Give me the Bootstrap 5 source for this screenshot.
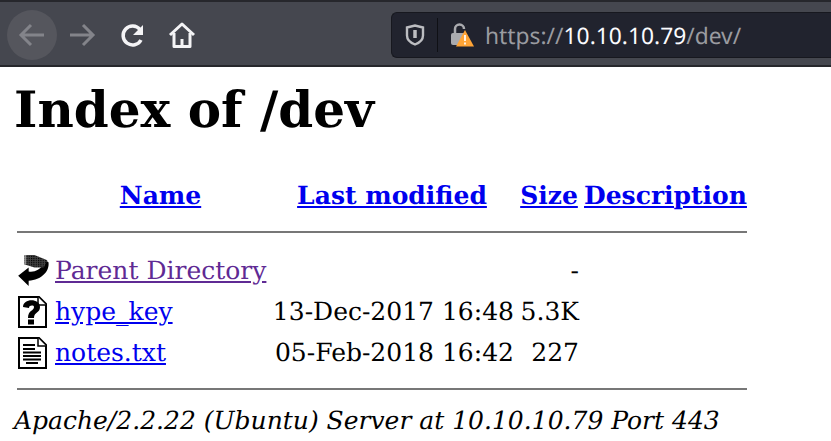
<!DOCTYPE html>
<html lang="en">
<head>
<meta charset="utf-8">
<title>Index of /dev</title>
<link href="https://cdn.jsdelivr.net/npm/bootstrap@5.3.0/dist/css/bootstrap.min.css" rel="stylesheet">
<style>
html,body{height:441px;overflow:hidden}
body{background:#fff;color:#000;font-family:"DejaVu Serif",serif;font-size:25px;line-height:29px;text-rendering:geometricPrecision}
.chrome{height:67px;background:#45474f;border-top:2px solid #26272c;border-bottom:2px solid #26272c;padding:3px 0 0 7px}
.tbtn{width:50px;height:50px;flex:none}
.tbtn.back{background:#55565d;border-radius:50%}
.urlbar{margin-left:auto;width:440px;height:46px;background:#21232e;border:1px solid #17181f;border-right:0;border-radius:6px 0 0 6px;padding-left:13px;font-family:"Noto Sans","Open Sans",sans-serif;font-size:22.800px;color:#9a9ba0}
.urlbar b{font-weight:400;color:#fbfbfe}
.sep{width:1px;height:34px;background:#0f1015;margin:0 12px}
.lockic{margin-right:11px}
.pg{padding:0 0 0 14px}
h1.ttl{font-family:"DejaVu Serif",serif;font-weight:700;font-size:50px;line-height:58px;margin:14px 0 0;color:#000}
.lst{margin:36px 0 0 0;border-collapse:separate;border-spacing:3px 0;table-layout:fixed;width:736px}
.lst th{font-weight:700;text-align:center;height:38px;vertical-align:middle;padding:2px 0 0}
.lst th.dsc{padding-left:1px}
.lst td{padding:0;height:41px;vertical-align:middle;white-space:nowrap}
.lst a{color:#00e}
.lst a.seen{color:#5f2a94}
.lst .rline td{height:37px}
.lst .rline.endline td{height:31px}
.lst .rline hr{margin:0;border:0;border-top:2px solid #777;opacity:1}
.lst .tm{text-align:right;padding-right:1px}
.lst .sz{text-align:right;padding-right:1px}
.ico{display:block}
.c1{width:35px}.c2{width:211px}.c3{width:246px}.c4{width:62px}
.foot{font-style:italic;margin:2px 0 0 0;line-height:29px}
</style>
</head>
<body>
<div class="chrome d-flex align-items-center">
  <div class="tbtn back d-flex align-items-center justify-content-center">
    <svg width="30" height="30" viewBox="0 0 30 30" fill="none" stroke="#83848a" stroke-width="3"><path d="M27 15H4M14 5L4 15l10 10"/></svg>
  </div>
  <div class="tbtn d-flex align-items-center justify-content-center">
    <svg width="30" height="30" viewBox="0 0 30 30" fill="none" stroke="#83848a" stroke-width="3"><path d="M3 15h23M16 5l10 10-10 10"/></svg>
  </div>
  <div class="tbtn d-flex align-items-center justify-content-center">
    <svg width="30" height="30" viewBox="0 0 30 30" fill="none" stroke="#f4f4f6" stroke-width="3.500"><path d="M24 20a9.500 9.500 0 1 1-1-10.500"/><path d="M26 5v10H16z" fill="#f4f4f6" stroke="none"/></svg>
  </div>
  <div class="tbtn d-flex align-items-center justify-content-center">
    <svg width="28" height="28" viewBox="0 0 28 28" fill="none" stroke="#f4f4f6" stroke-width="3" stroke-linejoin="round"><path d="M2 14L14 3l12 11"/><path d="M6 12v13.500h16V12"/><rect x="12.500" y="18" width="3" height="7" fill="#f4f4f6" stroke="none"/></svg>
  </div>
  <div class="urlbar d-flex align-items-center">
    <svg width="20" height="22" viewBox="0 0 20 22" fill="none" stroke="#bcbdc1" stroke-width="2.400"><path d="M2 3.500 10 1.500l8 2v8c0 4.500-4 7.500-8 9-4-1.500-8-4.500-8-9z"/><path d="M10 6v8" stroke-width="3.500"/></svg>
    <span class="sep"></span>
    <svg width="24" height="26" viewBox="0 0 24 26" class="lockic"><path d="M5 11V7a4.500 4.500 0 0 1 9 0" fill="none" stroke="#aaabaf" stroke-width="2.500"/><rect x="1" y="11" width="15" height="12" rx="2" fill="#aaabaf"/><path d="M15 8l9 16.500H6z" fill="#ffa436"/><path d="M15 13v6M15 20.500v2" stroke="#fff" stroke-width="1.700"/></svg>
    <span>https://<b>10.10.10.79</b>/dev/</span>
  </div>
</div>
<div class="pg">
  <h1 class="ttl">Index of /dev</h1>
  <table class="lst">
    <colgroup><col class="c1"><col class="c2"><col class="c3"><col class="c4"><col></colgroup>
    <tr><th></th><th><a href="#">Name</a></th><th><a href="#">Last modified</a></th><th><a href="#">Size</a></th><th class="dsc"><a href="#">Description</a></th></tr>
    <tr class="rline"><td colspan="5"><hr></td></tr>
    <tr>
      <td><svg class="ico" width="35" height="34" viewBox="0 0 30 33" preserveAspectRatio="none"><defs><pattern id="dth" width="2" height="2" patternUnits="userSpaceOnUse"><rect width="2" height="2" fill="#444"/><rect width="1" height="1" fill="#000"/></pattern></defs><path d="M1 21L10 13v4c5 1 10-2 12-6l1-6 4 3c1 9-6 17-17 18v5z" fill="#000"/><path d="M6 1h9l11 5-3 7h-8l-9-3z" fill="url(#dth)"/><path d="M6 1h2v9H6z" fill="#fff" opacity=".45"/></svg></td>
      <td><a class="seen" href="#">Parent Directory</a></td>
      <td></td>
      <td class="sz">-</td>
      <td></td>
    </tr>
    <tr>
      <td><svg class="ico" width="34" height="34" viewBox="0 0 34 34"><path d="M2 2h20l7 7v23H2z" fill="#fff" stroke="#000" stroke-width="2"/><path d="M21 2v8h8" fill="#fff" stroke="#000" stroke-width="1.500"/><path d="M6 12C6 3 23 3 23 12c0 6-6 5-6 11h-6c0-8 6-7 6-11 0-2-5-2-5 1z" fill="#000"/><rect x="11" y="24.500" width="6" height="5" fill="#000"/></svg></td>
      <td><a href="#">hype_key</a></td>
      <td class="tm">13-Dec-2017 16:48</td>
      <td class="sz">5.3K</td>
      <td></td>
    </tr>
    <tr>
      <td><svg class="ico" width="34" height="34" viewBox="0 0 34 34"><path d="M2 2h20l7 7v23H2z" fill="#fff" stroke="#000" stroke-width="2"/><path d="M21 2v8h8" fill="#fff" stroke="#000" stroke-width="1.500"/><path d="M6 9h12M6 13h12M6 16.500h18M6 20h18M6 23.500h18M9 27h12" stroke="#000" stroke-width="2"/></svg></td>
      <td><a href="#">notes.txt</a></td>
      <td class="tm">05-Feb-2018 16:42</td>
      <td class="sz">227</td>
      <td></td>
    </tr>
    <tr class="rline endline"><td colspan="5"><hr></td></tr>
  </table>
  <div class="foot">Apache/2.2.22 (Ubuntu) Server at 10.10.10.79 Port 443</div>
</div>
</body>
</html>
